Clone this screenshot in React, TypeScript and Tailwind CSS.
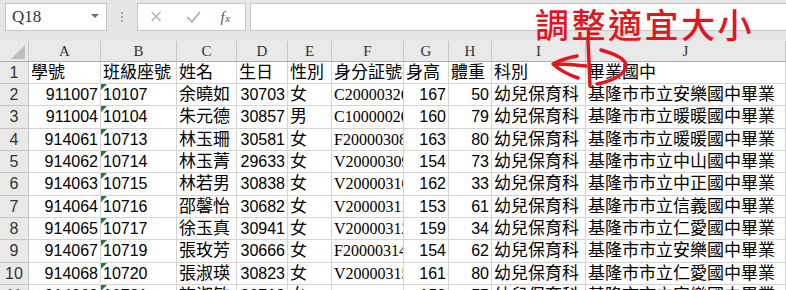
import { FC } from "react";

const FONT_CJK = "font-['Liberation_Serif','Noto_Sans_CJK_TC',serif]";

const COLS = [
  { key: "A", w: "w-[72px]" },
  { key: "B", w: "w-[76px]" },
  { key: "C", w: "w-[60px]" },
  { key: "D", w: "w-[51px]" },
  { key: "E", w: "w-[44px]" },
  { key: "F", w: "w-[72px]" },
  { key: "G", w: "w-[45px]" },
  { key: "H", w: "w-[43px]" },
  { key: "I", w: "w-[94px]" },
  { key: "J", w: "w-[200px]" },
];

const ROW_H = ["h-[22px]", "h-[22px]", "h-[23px]", "h-[22px]", "h-[22px]", "h-[23px]", "h-[22px]", "h-[22px]", "h-[23px]", "h-[22px]", "h-[22px]"];

const HEAD = ["學號", "班級座號", "姓名", "生日", "性別", "身分証號碼", "身高", "體重", "科別", "畢業國中"];

const DATA: string[][] = [
  ["911007", "10107", "余曉如", "30703", "女", "C200003266", "167", "50", "幼兒保育科", "基隆市市立安樂國中畢業"],
  ["911004", "10104", "朱元德", "30857", "男", "C100000200", "160", "79", "幼兒保育科", "基隆市市立暖暖國中畢業"],
  ["914061", "10713", "林玉珊", "30581", "女", "F200003088", "163", "80", "幼兒保育科", "基隆市市立暖暖國中畢業"],
  ["914062", "10714", "林玉菁", "29633", "女", "V200003099", "154", "73", "幼兒保育科", "基隆市市立中山國中畢業"],
  ["914063", "10715", "林若男", "30838", "女", "V200003100", "162", "33", "幼兒保育科", "基隆市市立中正國中畢業"],
  ["914064", "10716", "邵馨怡", "30682", "女", "V200003111", "153", "61", "幼兒保育科", "基隆市市立信義國中畢業"],
  ["914065", "10717", "徐玉真", "30941", "女", "V200003122", "159", "34", "幼兒保育科", "基隆市市立仁愛國中畢業"],
  ["914067", "10719", "張玫芳", "30666", "女", "F200003144", "154", "62", "幼兒保育科", "基隆市市立安樂國中畢業"],
  ["914068", "10720", "張淑瑛", "30823", "女", "V200003155", "161", "80", "幼兒保育科", "基隆市市立仁愛國中畢業"],
  ["914069", "10721", "許淑敏", "30712", "女", "V200003166", "158", "55", "幼兒保育科", "基隆市市立安樂國中畢業"],
];

const RIGHT = [0, 3, 6, 7];

const Toolbar: FC = () => (
  <div className="flex h-[41px] items-start bg-[#e6e6e6] pt-[3px] pl-[5px]">
    <div className="flex h-[28px] w-[102px] items-center justify-between border border-[#c6c6c6] bg-white pl-[6px] pr-[7px]">
      <span className="font-['Liberation_Serif',serif] text-[17px] text-[#333]">Q18</span>
      <span className="mb-[3px] h-0 w-0 border-x-[4px] border-t-[4px] border-x-transparent border-t-[#6f6f6f]" />
    </div>
    <div className="flex h-[28px] w-[30px] flex-col items-center justify-center gap-[2px]">
      <span className="h-[2px] w-[2px] bg-[#a8a8a8]" />
      <span className="h-[2px] w-[2px] bg-[#a8a8a8]" />
      <span className="h-[2px] w-[2px] bg-[#a8a8a8]" />
    </div>
    <div className="flex h-[28px] w-[109px] items-center border border-[#c6c6c6] bg-white">
      <svg width="109" height="26" viewBox="0 0 109 26">
        <path d="M14 8 L23 17 M23 8 L14 17" stroke="#b3b3b3" strokeWidth="1.5" fill="none" />
        <path d="M50 13 L55 18 L63 8" stroke="#b3b3b3" strokeWidth="1.8" fill="none" />
        <text x="84" y="18" fontFamily="Liberation Serif, serif" fontStyle="italic" fontSize="15" fill="#555">f</text>
        <text x="89" y="18" fontFamily="Liberation Serif, serif" fontStyle="italic" fontSize="11" fill="#555">x</text>
      </svg>
    </div>
    <div className="ml-[4px] h-[28px] flex-1 border border-r-0 border-[#c6c6c6] bg-white" />
  </div>
);

const HeaderRow: FC = () => (
  <div className="flex h-[21px] border-b border-[#ababab] bg-[#e9e9e9]">
    <div className="flex w-[29px] items-end justify-end border-r border-[#c6c6c6] pr-[3px] pb-[2px]">
      <span className="h-0 w-0 border-b-[14px] border-l-[14px] border-b-[#bdbdbd] border-l-transparent" />
    </div>
    {COLS.map((c) => (
      <div
        key={c.key}
        className={`${c.w} flex shrink-0 items-center justify-center border-r border-[#c6c6c6] font-['Liberation_Serif',serif] text-[15px] text-[#333]`}
      >
        {c.key}
      </div>
    ))}
  </div>
);

const Row: FC<{ n: number; cells: string[] }> = ({ n, cells }) => (
  <div className={`flex ${ROW_H[n - 1]} shrink-0`}>
    <div className="flex w-[29px] items-center justify-center border-r border-b border-[#c6c6c6] bg-[#e9e9e9] font-['Liberation_Sans',sans-serif] text-[16px] text-[#333]">
      {n}
    </div>
    {COLS.map((c, i) => {
      const right = n > 1 && RIGHT.includes(i);
      const mono = n > 1 && i === 5;
      const num = n > 1 && (RIGHT.includes(i) || i === 1);
      return (
        <div
          key={c.key}
          className={`${c.w} relative flex shrink-0 items-center overflow-hidden whitespace-nowrap border-r border-b border-[#d4d4d4] bg-white px-[2px] text-black ${
            right ? "justify-end" : "justify-start"
          } ${
            num
              ? "font-['Liberation_Sans',sans-serif] text-[16px]"
              : mono
              ? "font-['Liberation_Serif',serif] text-[16px]"
              : `${FONT_CJK} text-[17px]`
          }`}
        >
          {n > 1 && i === 1 && (
            <span className="absolute top-0 left-0 h-0 w-0 border-t-[6px] border-r-[6px] border-t-[#217a3a] border-r-transparent" />
          )}
          {cells[i]}
        </div>
      );
    })}
  </div>
);

const Annotation: FC = () => (
  <>
    <div className="pointer-events-none absolute top-[2px] left-[535px] font-['Noto_Sans_CJK_TC',sans-serif] text-[34px] leading-[44px] font-medium tracking-[2.5px] text-[#e2161e]">
      調整適宜大小
    </div>
    <svg className="pointer-events-none absolute top-0 left-0" width="786" height="290" viewBox="0 0 786 290">
      <g stroke="#e2161e" strokeWidth="3.5" fill="none" strokeLinecap="round" strokeLinejoin="round">
        <path d="M588 40 L590 86" />
        <path d="M586 66 Q570 64 554 64" />
        <path d="M577 56 Q562 59 553 64 Q563 73 578 78" />
        <path d="M601 50 Q627 57 626 67 Q622 79 597 84" />
      </g>
    </svg>
  </>
);

const App: FC = () => {
  return (
    <div className="relative h-[290px] w-[786px] overflow-hidden bg-white">
      <Toolbar />
      <HeaderRow />
      <Row n={1} cells={HEAD} />
      {DATA.map((r, i) => (
        <Row key={i} n={i + 2} cells={r} />
      ))}
      <Annotation />
    </div>
  );
};

export default App;
